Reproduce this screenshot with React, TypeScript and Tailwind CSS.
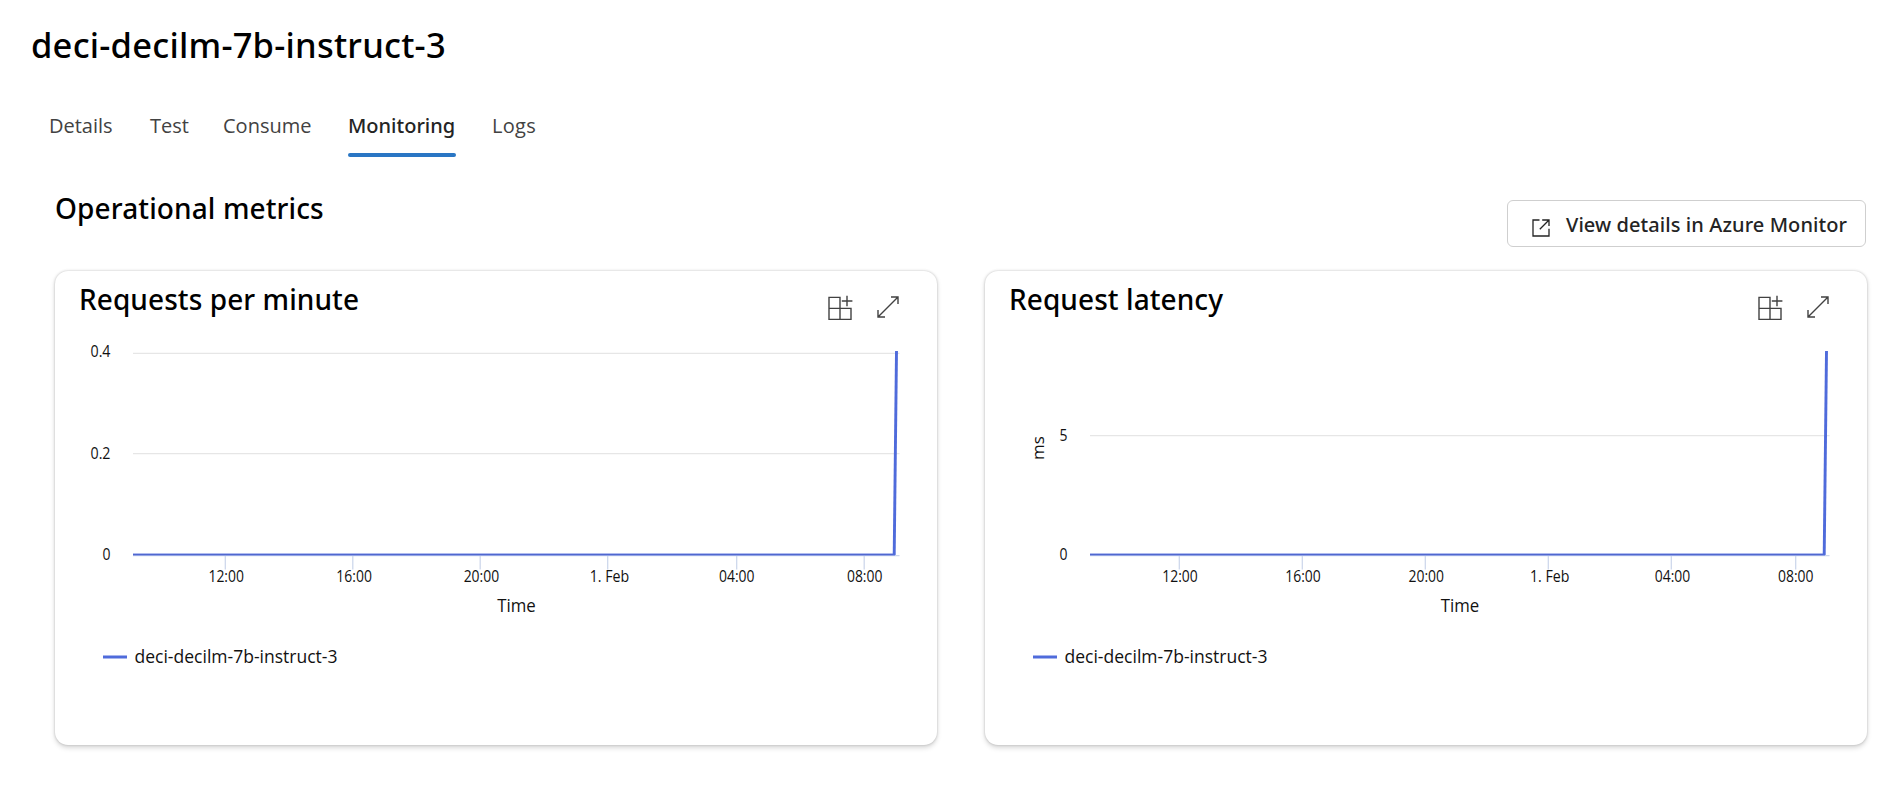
type Label = { text: string; x: number };
type YLabel = { text: string; y: number };

type Metric = {
  title: string;
  series: string;
  unit?: string;
  plotLeft: number;
  plotRight: number;
  grid: number[];
  yLabelRight: number;
  yLabels: YLabel[];
  ticks: number[];
  xLabels: Label[];
  timeCenter: number;
};

const SERIES = "deci-decilm-7b-instruct-3";

const METRICS: Metric[] = [
  {
    title: "Requests per minute",
    series: SERIES,
    plotLeft: 78,
    plotRight: 844.5,
    grid: [23.3, 123.6],
    yLabelRight: 55.5,
    yLabels: [
      { text: "0.4", y: 27 },
      { text: "0.2", y: 129 },
      { text: "0", y: 230 },
    ],
    ticks: [170.3, 297.8, 425.2, 552.7, 681.7, 809.2],
    xLabels: [
      { text: "12:00", x: 171.2 },
      { text: "16:00", x: 299.1 },
      { text: "20:00", x: 426.4 },
      { text: "1. Feb", x: 554.5 },
      { text: "04:00", x: 681.8 },
      { text: "08:00", x: 809.7 },
    ],
    timeCenter: 461.5,
  },
  {
    title: "Request latency",
    series: SERIES,
    unit: "ms",
    plotLeft: 105,
    plotRight: 844.5,
    grid: [105.7],
    yLabelRight: 82.5,
    yLabels: [
      { text: "5", y: 111 },
      { text: "0", y: 230 },
    ],
    ticks: [194.3, 317.3, 440.3, 563.3, 686.3, 810.7],
    xLabels: [
      { text: "12:00", x: 195 },
      { text: "16:00", x: 318 },
      { text: "20:00", x: 441.3 },
      { text: "1. Feb", x: 564.7 },
      { text: "04:00", x: 687.5 },
      { text: "08:00", x: 810.8 },
    ],
    timeCenter: 475,
  },
];

const TABS = [
  { name: "Details", style: "w-[63px] mr-[38px]" },
  { name: "Test", style: "w-[37px] mr-[36px]" },
  { name: "Consume", style: "w-[88px] mr-[37px]" },
  { name: "Monitoring", style: "w-[108px] mr-[36px]" },
  { name: "Logs", style: "w-[44px] tracking-[0.3px]" },
];

function OpenIcon() {
  return (
    <svg width="18" height="18" viewBox="0 0 18 18" fill="none" stroke="#242424" strokeWidth="1.3">
      <path d="M7.5 1H1v16h16V9.8" />
      <path d="M10.2 1H17v6M17 1 7.8 10.2" />
    </svg>
  );
}

function GridAddIcon() {
  return (
    <svg width="25" height="25" viewBox="0 0 25 25" fill="none" stroke="#424242" strokeWidth="1.4">
      <path d="M1 2.4h11v11H1zM1 13.4h11v11H1zM12 13.4h11v11H12z" />
      <path d="M19 0.8v10.4M13.8 6h10.6" />
    </svg>
  );
}

function ExpandIcon() {
  return (
    <svg width="22" height="22" viewBox="0 0 22 22" fill="none" stroke="#424242" strokeWidth="1.4">
      <path d="M1 21 21 1M14 1h7v7M1 14v7h7" />
    </svg>
  );
}

function Chart({ metric }: { metric: Metric }) {
  const { plotLeft, plotRight } = metric;
  return (
    <svg
      width="882"
      height="360"
      viewBox="0 0 882 360"
      className="block font-['Open_Sans',sans-serif]"
      fill="#111111"
    >
      {metric.grid.map((y) => (
        <path key={y} d={`M${plotLeft} ${y}H${plotRight}`} stroke="#e6e6e6" strokeWidth="1.25" />
      ))}
      <path d={`M${plotLeft} 225.6H${plotRight}`} stroke="#ccd6eb" strokeWidth="1.25" />
      {metric.ticks.map((x) => (
        <path key={x} d={`M${x} 226V239.5`} stroke="#ccd6eb" strokeWidth="1.25" />
      ))}
      <path d={`M${plotLeft} 224.5H840`} stroke="#4f6bdb" strokeOpacity="0.45" strokeWidth="3" />
      <path d={`M${plotLeft} 224.5H840`} stroke="#5067cf" strokeWidth="1" />
      <path d="M839.2 225 841.5 21" stroke="#4f6bdb" strokeWidth="2.9" />
      {metric.yLabels.map((l) => (
        <text
          key={l.text}
          x={metric.yLabelRight}
          y={l.y}
          textAnchor="end"
          fontSize="15.4"
          textLength={l.text.length === 3 ? 20 : 8}
          lengthAdjust="spacingAndGlyphs"
        >
          {l.text}
        </text>
      ))}
      {metric.xLabels.map((l) => (
        <text
          key={l.text}
          x={l.x}
          y="252.3"
          textAnchor="middle"
          fontSize="15.4"
          textLength={l.text === "1. Feb" ? 39.5 : 35.5}
          lengthAdjust="spacingAndGlyphs"
        >
          {l.text}
        </text>
      ))}
      <text
        x={metric.timeCenter}
        y="282.3"
        textAnchor="middle"
        fontSize="18"
        textLength="38.5"
        lengthAdjust="spacingAndGlyphs"
      >
        Time
      </text>
      {metric.unit && (
        <text transform="translate(58.8 118) rotate(-90)" textAnchor="middle" fontSize="17">
          {metric.unit}
        </text>
      )}
      <path d="M48 327H72" stroke="#4f6bdb" strokeWidth="3" />
      <text x="79.5" y="333" fontSize="17.8" textLength="203" lengthAdjust="spacingAndGlyphs">
        {metric.series}
      </text>
    </svg>
  );
}

function MetricCard({ metric }: { metric: Metric }) {
  return (
    <section className="h-[474px] rounded-[13px] bg-white shadow-[0_0_2.5px_rgba(0,0,0,0.22),0_2.5px_5px_rgba(0,0,0,0.15)]">
      <div className="flex h-[59px] items-start justify-between pl-[24px] pr-[38px]">
        <h3 className="pt-[8px] text-[28px] leading-[40px] font-medium tracking-[0.08px] text-black">
          {metric.title}
        </h3>
        <div className="flex items-start gap-6 pt-[24px]">
          <GridAddIcon />
          <div className="pt-px">
            <ExpandIcon />
          </div>
        </div>
      </div>
      <Chart metric={metric} />
    </section>
  );
}

export default function App() {
  return (
    <main className="h-[790px] overflow-hidden bg-white font-['Noto_Sans',sans-serif] text-black">
      <h1 className="pt-[20px] pl-[31px] text-[34.5px] leading-[50px] font-medium tracking-[0.22px]">
        {SERIES}
      </h1>
      <nav className="mt-[37px] flex h-[50px] pl-[49px] text-[20px] leading-[38px] whitespace-nowrap">
        {TABS.map((tab) => {
          const active = tab.name === "Monitoring";
          return (
            <div key={tab.name} className={`flex flex-col ${tab.style}`}>
              <span
                className={
                  active
                    ? "font-medium text-[#242424]"
                    : "font-['Open_Sans',sans-serif] text-[#424242]"
                }
              >
                {tab.name}
              </span>
              {active && <span className="mt-2 h-1 w-full rounded-full bg-[#2a76c4]" />}
            </div>
          );
        })}
      </nav>
      <div className="flex h-[114px] justify-between pr-7 pl-[55px]">
        <h2 className="pt-[31px] text-[28px] leading-[40px] font-medium tracking-[0.12px]">
          Operational metrics
        </h2>
        <button className="mt-[43px] flex h-[47px] w-[359px] items-center rounded-md border border-[#cfcfcf] pl-[24px] text-[20px] font-medium whitespace-nowrap text-[#242424]">
          <span className="pt-[8px]">
            <OpenIcon />
          </span>
          <span className="pt-[3px] pl-[16px] tracking-[0.08px]">View details in Azure Monitor</span>
        </button>
      </div>
      <div className="grid grid-cols-2 gap-12 pr-[27px] pl-[55px]">
        {METRICS.map((metric) => (
          <MetricCard key={metric.title} metric={metric} />
        ))}
      </div>
    </main>
  );
}
